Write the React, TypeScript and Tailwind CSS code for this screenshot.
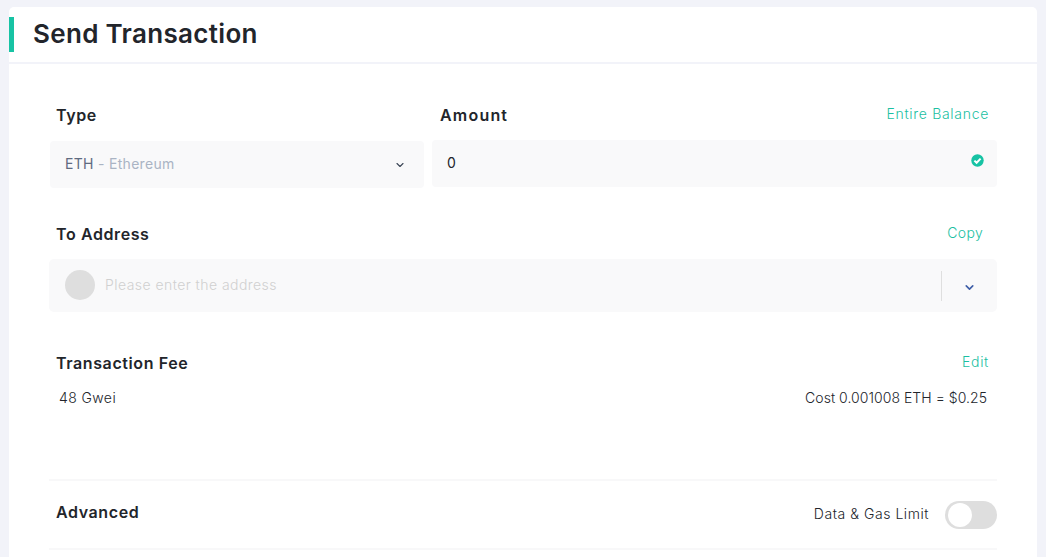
import React from 'react';
import { ChevronDown } from 'lucide-react';

const Label: React.FC<{ children: React.ReactNode }> = ({ children }) => (
  <span className="text-[16px] leading-[20px] font-semibold tracking-[0.6px] text-[#22252b]">{children}</span>
);

const LinkText: React.FC<{ children: React.ReactNode }> = ({ children }) => (
  <span className="mb-[2px] block text-[14px] leading-[20px] font-light tracking-[0.7px] text-[#1bbfa2]">{children}</span>
);

const App: React.FC = () => {
  return (
    <div className="h-[557px] w-[1046px] overflow-hidden bg-[#f2f3f9] pt-[7px] pr-[9px] pl-[9px] font-['Inter',sans-serif]">
      <div className="h-[550px] rounded-t-[5px] bg-white">
        {/* header */}
        <div className="flex h-[57px] items-center border-b-2 border-[#f2f3f9] pb-[2px]">
          <div className="mt-[1px] h-[35px] w-[5px] bg-[#17c3a4]" />
          <h1 className="ml-[19px] text-[26px] leading-[32px] font-semibold tracking-[0.32px] text-[#22252b]">Send Transaction</h1>
        </div>

        <div className="pr-[40px] pl-[41px]">
          {/* type and amount */}
          <div className="mt-[41px] flex gap-[8px]">
            <div className="w-[374px]">
              <div className="flex h-[20px] items-center pl-[6px]">
                <Label>Type</Label>
              </div>
              <div className="mt-[16px] flex h-[47px] items-center justify-between rounded-[4px] bg-[#f9f9fa] pr-[18px] pl-[15px]">
                <span className="mb-[2px] text-[14px] tracking-[0.3px] text-[#aab4c4]">
                  <span className="text-[#5f6b80]">ETH</span> - Ethereum
                </span>
                <ChevronDown size={12} strokeWidth={2.25} className="text-[#3c4656]" />
              </div>
            </div>
            <div className="flex-1">
              <div className="flex h-[20px] items-center justify-between pr-[8px] pl-[8px]">
                <span className="text-[16px] leading-[20px] font-semibold tracking-[1.2px] text-[#22252b]">Amount</span>
                <LinkText>Entire Balance</LinkText>
              </div>
              <div className="mt-[15px] flex h-[47px] items-start justify-between rounded-[4px] bg-[#f9f9fa] pt-[13px] pr-[13px] pl-[15px]">
                <span className="text-[14px] leading-[20px] text-[#22252b]">0</span>
                <svg width="13" height="13" viewBox="0 0 13 13" className="mt-[1px]">
                  <circle cx="6.5" cy="6.5" r="6.2" fill="#17c3a4" />
                  <path d="M3.4 6.6 L5.6 8.8 L9.6 4.6" fill="none" stroke="#fff" strokeWidth="2" />
                </svg>
              </div>
            </div>
          </div>

          {/* to address */}
          <div className="mt-[36px] flex h-[20px] items-center justify-between pr-[14px] pl-[6px]">
            <Label>To Address</Label>
            <span className="mb-[2px] block text-[14px] leading-[20px] font-light tracking-[0.3px] text-[#1bbfa2]">Copy</span>
          </div>
          <div className="mt-[15px] -ml-[1px] flex h-[53px] items-center rounded-[5px] bg-[#f9f9fa] pl-[16px]">
            <div className="mb-[2px] h-[30px] w-[30px] rounded-full bg-[#dedede]" />
            <span className="mb-[2px] ml-[10px] text-[14px] font-light tracking-[0.45px] text-[#d0d0d0]">Please enter the address</span>
            <div className="ml-auto h-[30px] w-px bg-[#dfdfdf]" />
            <div className="flex w-[55px] justify-center">
              <ChevronDown size={13} strokeWidth={3} className="mt-[3px] text-[#3f5fa8]" />
            </div>
          </div>

          {/* fee */}
          <div className="mt-[41px] flex h-[20px] items-center justify-between pr-[8px] pl-[6px]">
            <Label>Transaction Fee</Label>
            <LinkText>Edit</LinkText>
          </div>
          <div className="mt-[14px] flex h-[20px] items-center justify-between pr-[10px] pl-[9px] text-[14px] font-light text-[#22252b]">
            <span className="tracking-[0.4px]">48 Gwei</span>
            <span className="tracking-[0.04px]">Cost 0.001008 ETH = $0.25</span>
          </div>

          {/* advanced */}
          <div className="mt-[72px] -ml-[1px] flex h-[71px] items-center justify-between border-y-2 border-[#f8f8f9] pl-[7px]">
            <div className="mb-[5px]">
              <Label>Advanced</Label>
            </div>
            <div className="flex items-center gap-[16px]">
              <span className="mb-[2px] text-[14px] font-light tracking-[0.55px] text-[#22252b]">Data &amp; Gas Limit</span>
              <div className="flex h-[28px] w-[52px] items-center rounded-full bg-[#dedede] pl-[3px]">
                <div className="h-[24px] w-[24px] rounded-full bg-white" />
              </div>
            </div>
          </div>
        </div>
      </div>
    </div>
  );
};

export default App;
